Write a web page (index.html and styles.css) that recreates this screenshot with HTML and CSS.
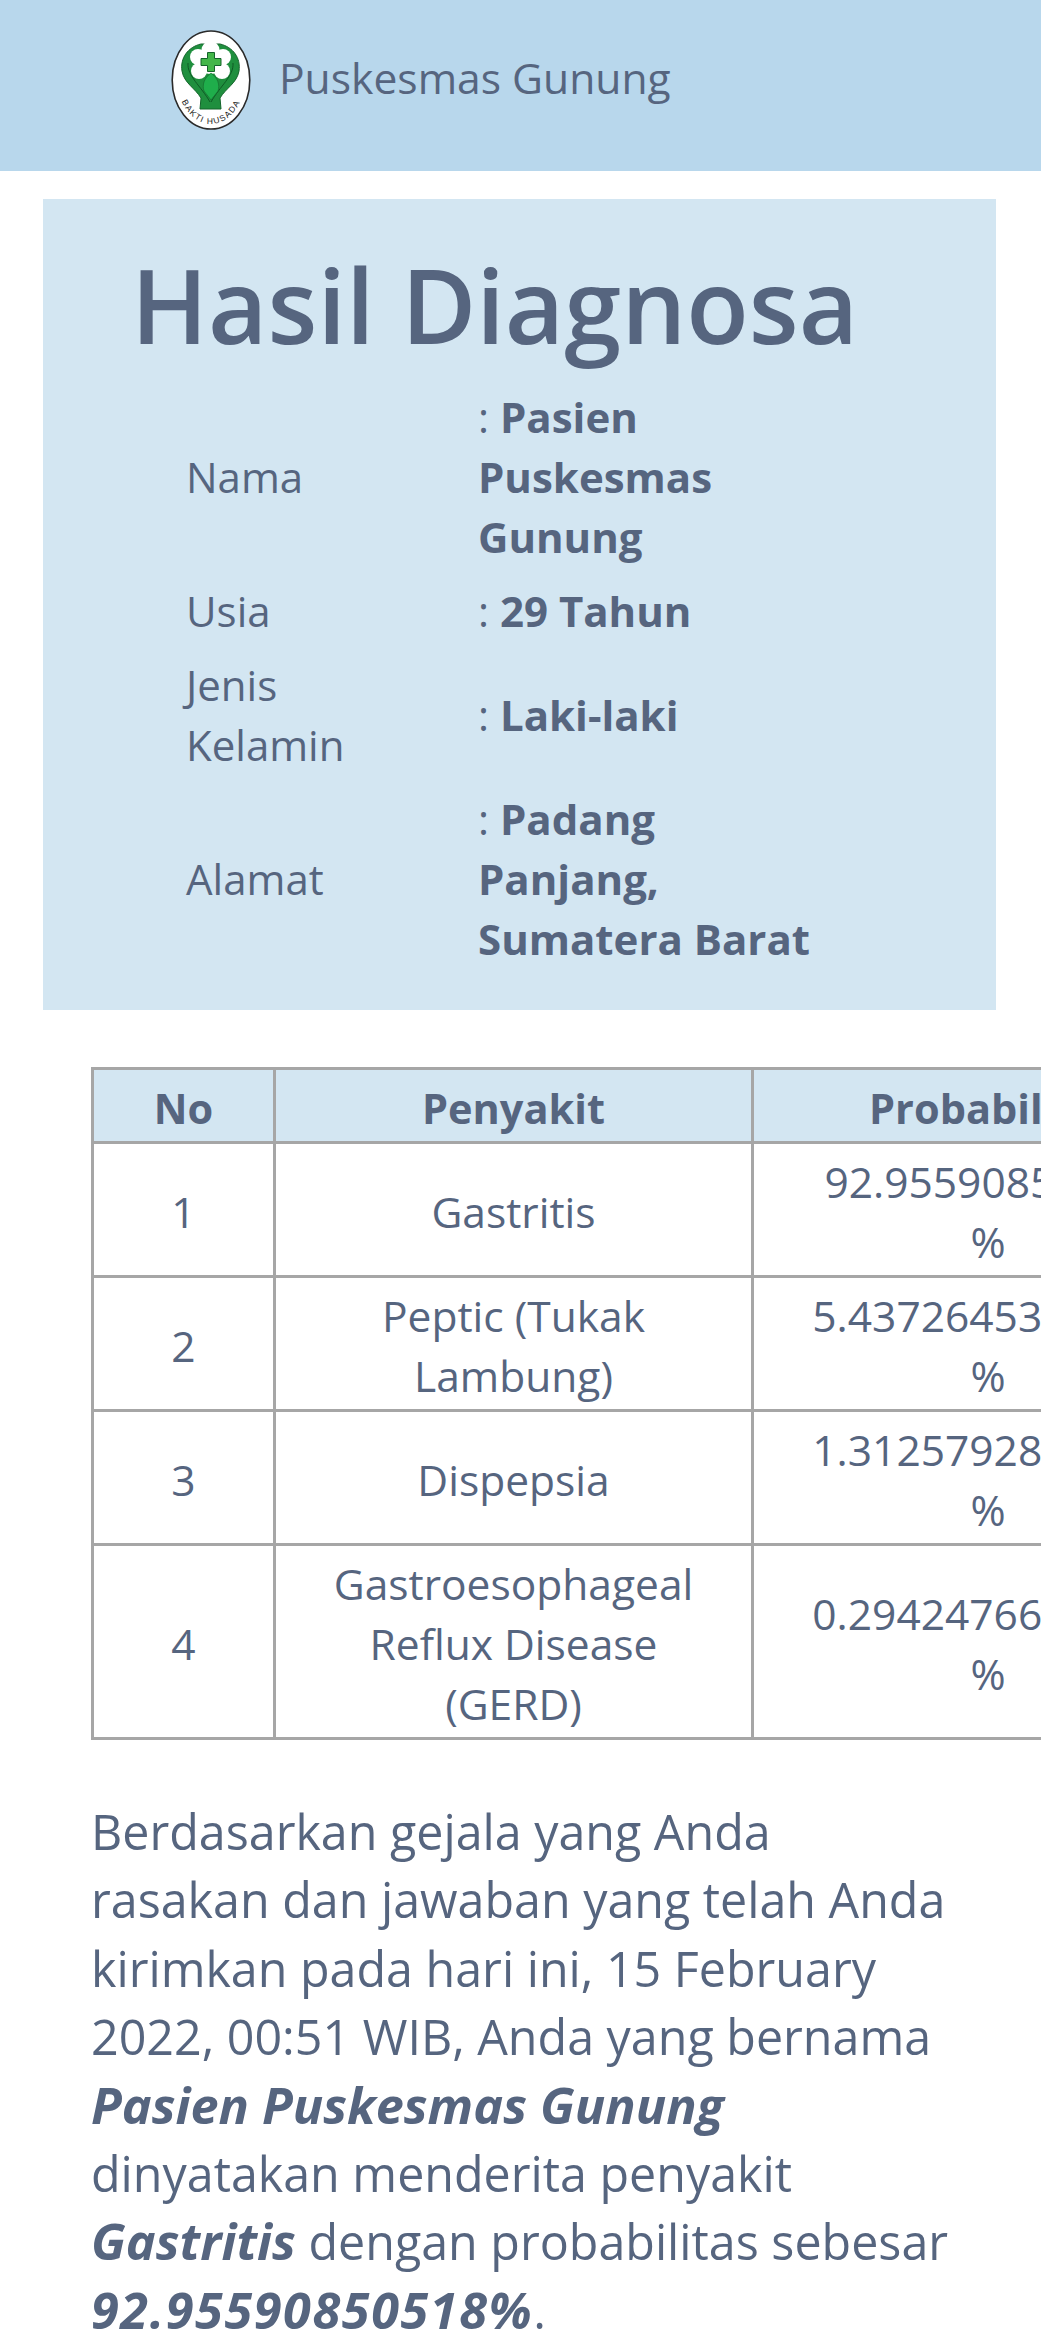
FILE: index.html
```html
<!DOCTYPE html>
<html lang="id">
<head>
<meta charset="utf-8">
<title>Hasil Diagnosa</title>
<link rel="stylesheet" href="styles.css">
</head>
<body>
<header class="topbar">
  <svg class="logo" viewBox="0 0 80 100" width="80" height="100" aria-hidden="true">
    <ellipse cx="40" cy="50" rx="38.800" ry="49" fill="#fff" stroke="#2a2a2a" stroke-width="1.600"/>
    <path d="M30 14C17 17 9 28 11 41C13 53 24 58 30 68L29 79H50L49 68C55 58 66 53 68 41C70 28 62 17 49 14Z" fill="#1f8f3e" stroke="#14642b" stroke-width="1"/>
    <path d="M17 33C16 46 30 56 39 72M62 33C63 46 49 56 40 72" fill="none" stroke="#0e5a25" stroke-width="1"/>
    <g fill="#fff">
      <circle cx="39.500" cy="20" r="9"/>
      <circle cx="27" cy="27" r="8"/>
      <circle cx="52" cy="27" r="8"/>
      <circle cx="28" cy="41" r="8"/>
      <circle cx="51" cy="41" r="8"/>
      <circle cx="39.500" cy="32" r="12"/>
    </g>
    <path d="M40 43C33 48 31 55 33 61L40 70L47 61C49 55 47 48 40 43Z" fill="#1fae4b" stroke="#14642b" stroke-width=".6"/>
    <path d="M36.500 22.500h7v6h6.500v7h-6.500v6h-7v-6h-6.500v-7h6.500z" fill="#43b649" stroke="#14642b" stroke-width="1"/>
    <path id="logo-arc" d="M6 58C11 80 25 94 40 94C55 94 69 80 74 58" fill="none"/>
    <text class="logo-text"><textPath href="#logo-arc" startOffset="50%" text-anchor="middle">BAKTI HUSADA</textPath></text>
  </svg>
  <span class="brand">Puskesmas Gunung</span>
</header>
<main>
  <section class="card">
    <h1>Hasil Diagnosa</h1>
    <table class="info">
      <tr><td class="k">Nama</td><td class="v">: <b>Pasien Puskesmas Gunung</b></td></tr>
      <tr><td class="k">Usia</td><td class="v">: <b>29 Tahun</b></td></tr>
      <tr><td class="k">Jenis Kelamin</td><td class="v">: <b>Laki-laki</b></td></tr>
      <tr><td class="k">Alamat</td><td class="v">: <b>Padang Panjang, Sumatera Barat</b></td></tr>
    </table>
  </section>
  <section class="results">
    <table class="grid">
      <thead><tr><th class="c1">No</th><th class="c2">Penyakit</th><th class="c3">Probabilitas</th></tr></thead>
      <tbody>
        <tr><td>1</td><td>Gastritis</td><td class="num">92.95590850518<br>%</td></tr>
        <tr><td>2</td><td>Peptic (Tukak Lambung)</td><td class="num">5.4372645312034<br>%</td></tr>
        <tr><td>3</td><td>Dispepsia</td><td class="num">1.3125792811021<br>%</td></tr>
        <tr><td>4</td><td>Gastroesophageal Reflux Disease (GERD)</td><td class="num">0.2942476625013<br>%</td></tr>
      </tbody>
    </table>
    <p class="summary">Berdasarkan gejala yang Anda rasakan dan jawaban yang telah Anda kirimkan pada hari ini, 15 February 2022, 00:51 WIB, Anda yang bernama <b><i>Pasien Puskesmas Gunung</i></b> dinyatakan menderita penyakit <b><i>Gastritis</i></b> dengan probabilitas sebesar <b class="digits"><i>92.95590850518%</i></b>.</p>
  </section>
</main>
</body>
</html>
```
FILE: styles.css
```css
* { box-sizing: border-box; }
html, body { margin: 0; padding: 0; }
body { width: 1041px; height: 2340px; overflow: hidden; background: #fff; color: #56657f; font-family: "Open Sans", "Noto Sans", sans-serif; font-size: 42px; }
.topbar { height: 171px; background: #b8d7ec; display: flex; align-items: flex-start; gap: 28px; padding: 30px 0 0 171px; }
.logo { flex: none; }
.logo-text { font-family: "Liberation Sans", sans-serif; font-size: 8.500px; letter-spacing: 1.300px; fill: #222; }
.brand { font-size: 42.600px; line-height: 60px; margin-top: 17px; }
.card { margin: 28px 45px 0 43px; height: 811px; background: #d3e6f2; padding: 40px 60px 0 88px; }
h1 { margin: 0; font-size: 102.500px; font-weight: 600; line-height: 130px; }
.info { border-collapse: collapse; margin: 11px 0 0 55px; width: 637px; }
.info td { padding: 7px 0; line-height: 60px; }
.info .k { width: 292px; padding-right: 100px; }
.info .v { width: 345px; }
.results { padding: 57px 0 0 91px; }
.grid { border-collapse: collapse; width: 1134px; table-layout: fixed; text-align: center; }
.grid th, .grid td { border: 3px solid #a6a6a6; line-height: 60px; padding: 8px 30px 3px; }
.grid td { font-size: 42.500px; }
.grid th { background: #d3e6f2; font-weight: 700; font-size: 41.500px; }
.grid .c3 { padding-left: 42px; }
.c1 { width: 182px; }
.c2 { width: 478px; }
.summary { margin: 57px 0 0; width: 865px; font-size: 48.400px; line-height: 68.400px; }
.summary b { font-size: 50.400px; }
.summary .digits { letter-spacing: 1.600px; }
```
